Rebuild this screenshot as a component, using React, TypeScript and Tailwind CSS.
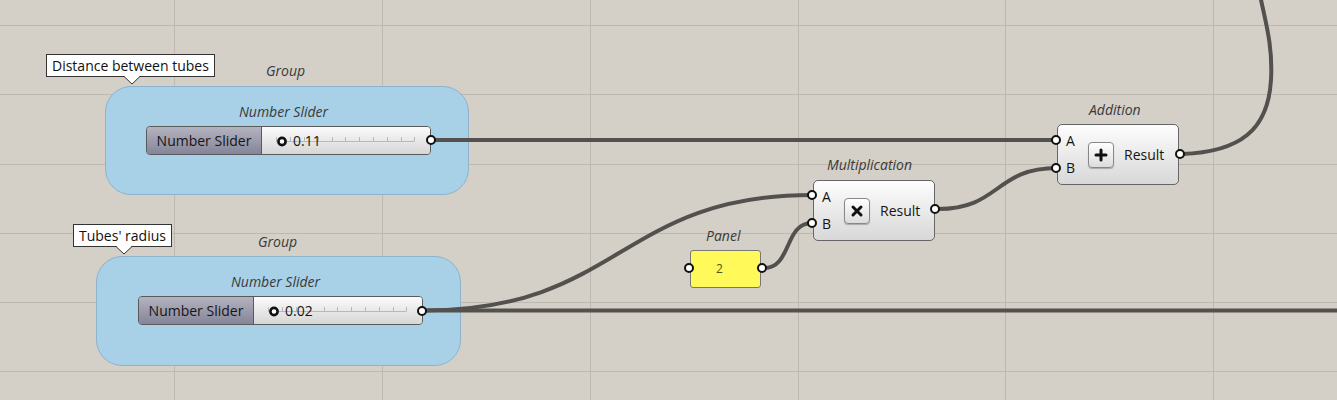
import type React from 'react'

// grasshopper canvas – grid + wires are svg, nodes sit on the canvas at their own coordinates

const Port = ({ className }: { className: string }) => (
  <div
    className={`absolute w-[10px] h-[10px] rounded-full border-2 border-[#111] bg-white ${className}`}
  />
)

const Label = ({ text, className }: { text: string; className: string }) => (
  <div className={`absolute italic text-[14px] text-[#3a3a3a] leading-none whitespace-nowrap ${className}`}>
    {text}
  </div>
)

const Tip = ({ text, className }: { text: string; className: string }) => (
  <div className={`absolute ${className}`}>
    <div className="relative bg-white border border-[#333] px-[5px] h-[23px] flex items-center text-[14px] text-[#111] leading-none whitespace-nowrap">
      {text}
    </div>
  </div>
)

const Slider = ({ value, className }: { value: string; className: string }) => (
  <div
    className={`absolute h-[29px] w-[285px] flex rounded-[4px] border border-[#5a5a5a] overflow-hidden ${className}`}
  >
    <div className="w-[115px] flex items-center justify-center bg-gradient-to-b from-[#b3b3c0] to-[#85859a] border-r border-[#5a5a5a] text-[14px] text-[#151515]">
      Number Slider
    </div>
    <div className="relative flex-1 flex items-center bg-gradient-to-b from-[#fbfbfb] to-[#d6d6d6]">
      <svg className="absolute left-0 top-0" width="170" height="29">
        <line x1="14" y1="14.5" x2="152" y2="14.5" stroke="#b8b8b8" strokeWidth="1" />
        {[14, 28, 42, 56, 70, 83, 97, 111, 125, 139, 152].map((x) => (
          <line key={x} x1={x + 0.5} y1="10" x2={x + 0.5} y2="14.5" stroke="#b8b8b8" strokeWidth="1" />
        ))}
        <circle cx="20" cy="14.5" r="3.6" fill="white" stroke="#111" strokeWidth="2.6" />
      </svg>
      <span className="relative ml-[31px] text-[14px] text-[#151515]">{value}</span>
    </div>
  </div>
)

const Operator = ({
  symbol,
  className,
}: {
  symbol: 'x' | '+'
  className: string
}) => (
  <div
    className={`absolute w-[122px] h-[61px] rounded-[5px] border border-[#666] bg-gradient-to-b from-[#fdfdfd] to-[#d8d8d8] flex items-center ${className}`}
  >
    <div className="flex flex-col justify-between h-[41px] ml-[8px] text-[14px] text-[#151515] leading-none">
      <span>A</span>
      <span>B</span>
    </div>
    <div className="ml-[13px] w-[26px] h-[26px] rounded-[4px] border border-[#888] bg-gradient-to-b from-white to-[#dcdcdc] shadow-[0_1px_1px_rgba(0,0,0,0.25)] flex items-center justify-center">
      <svg width="14" height="14" viewBox="0 0 14 14">
        {symbol === 'x' ? (
          <path d="M3 3 L11 11 M11 3 L3 11" stroke="#111" strokeWidth="3" strokeLinecap="round" />
        ) : (
          <path d="M7 2 V12 M2 7 H12" stroke="#111" strokeWidth="3" strokeLinecap="round" />
        )}
      </svg>
    </div>
    <span className="ml-[10px] text-[14px] text-[#151515]">Result</span>
  </div>
)

const Group = ({ className }: { className: string }) => (
  <div className={`absolute rounded-[26px] bg-[#a8d0e6] border border-[#8db4cc] ${className}`} />
)

export default function App() {
  const vLines = [174, 382, 590, 798, 1005, 1213]
  const hLines = [25, 94, 164, 233, 302, 371]

  return (
    <div
      className="relative w-[1337px] h-[400px] overflow-hidden bg-[#d4d0c8]"
      style={{ fontFamily: '"Open Sans", "Noto Sans", sans-serif' }}
    >
      <svg className="absolute left-0 top-0" width="1337" height="400">
        {vLines.map((x) => (
          <line key={'v' + x} x1={x + 0.5} y1="0" x2={x + 0.5} y2="400" stroke="#bdb9b1" strokeWidth="1" />
        ))}
        {hLines.map((y) => (
          <line key={'h' + y} x1="0" y1={y + 0.5} x2="1337" y2={y + 0.5} stroke="#bdb9b1" strokeWidth="1" />
        ))}
      </svg>

      {/* groups */}
      <Label text="Group" className="left-[266px] top-[64px] text-[13px]" />
      <Group className="left-[105px] top-[86px] w-[364px] h-[109px]" />
      <Label text="Group" className="left-[258px] top-[235px] text-[13px]" />
      <Group className="left-[96px] top-[256px] w-[365px] h-[110px]" />

      {/* wires */}
      <svg className="absolute left-0 top-0" width="1337" height="400" fill="none">
        <g stroke="#53514d" strokeWidth="4" strokeLinecap="round">
          <path d="M432 140 H1057" />
          <path d="M424 310.5 C 620 310.5, 620 195, 812 195" />
          <path d="M424 310.5 H1340" />
          <path d="M764 268 C 792 268, 784 223, 812 223" />
          <path d="M938 209 C 1000 209, 995 168, 1057 168" />
          <path d="M1182 154 C 1240 152, 1268 130, 1271 80 C 1273 45, 1265 20, 1260 -5" />
        </g>
      </svg>

      {/* tooltips */}
      <Tip text="Distance between tubes" className="left-[46px] top-[54px]" />
      <svg className="absolute left-[124px] top-[76px]" width="18" height="10">
        <path d="M0 0.5 L8 8 L16 0.5" fill="white" stroke="#333" strokeWidth="1" />
        <path d="M1 0 H15" stroke="white" strokeWidth="2" />
      </svg>
      <Tip text="Tubes' radius" className="left-[73px] top-[224px]" />
      <svg className="absolute left-[116px] top-[246px]" width="18" height="10">
        <path d="M0 0.5 L8 8 L16 0.5" fill="white" stroke="#333" strokeWidth="1" />
        <path d="M1 0 H15" stroke="white" strokeWidth="2" />
      </svg>

      {/* sliders */}
      <Label text="Number Slider" className="left-[239px] top-[105px]" />
      <Slider value="0.11" className="left-[146px] top-[126px]" />
      <Port className="left-[426px] top-[135px]" />

      <Label text="Number Slider" className="left-[231px] top-[275px]" />
      <Slider value="0.02" className="left-[138px] top-[296px]" />
      <Port className="left-[417px] top-[306px]" />

      {/* panel */}
      <Label text="Panel" className="left-[706px] top-[229px]" />
      <div className="absolute left-[690px] top-[250px] w-[71px] h-[38px] rounded-[3px] border border-[#777] bg-[#fff95a] flex items-center pl-[25px] text-[12px] text-[#3f5a1a]">
        2
      </div>
      <Port className="left-[684px] top-[263px]" />
      <Port className="left-[757px] top-[263px]" />

      {/* multiplication */}
      <Label text="Multiplication" className="left-[827px] top-[158px]" />
      <Operator symbol="x" className="left-[813px] top-[180px]" />
      <Port className="left-[807px] top-[190px]" />
      <Port className="left-[807px] top-[218px]" />
      <Port className="left-[930px] top-[204px]" />

      {/* addition */}
      <Label text="Addition" className="left-[1089px] top-[103px]" />
      <Operator symbol="+" className="left-[1057px] top-[124px]" />
      <Port className="left-[1051px] top-[135px]" />
      <Port className="left-[1051px] top-[163px]" />
      <Port className="left-[1175px] top-[149px]" />
    </div>
  )
}
